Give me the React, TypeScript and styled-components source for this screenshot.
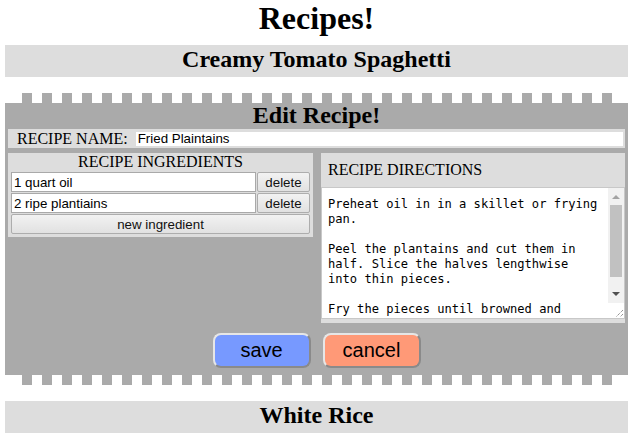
import styled, { createGlobalStyle } from "styled-components";

const GlobalStyle = createGlobalStyle`
  body {
    margin: 0;
    background: white;
    font-family: "Liberation Serif", "Times New Roman", serif;
    color: black;
  }
`;

const Page = styled.div`
  width: 623px;
  margin-left: 5px;
`;

const PageTitle = styled.h1`
  margin: 0 0 8px;
  font-size: 32px;
  line-height: 37px;
  text-align: center;
`;

const RecipeBar = styled.h2`
  margin: 0;
  height: 32px;
  background-color: #dddddd;
  font-size: 24px;
  line-height: 28px;
  text-align: center;
`;

const Editor = styled.div`
  margin: 16px 0;
`;

const Teeth = styled.div`
  height: 10px;
  margin: 0 16px 0 17px;
  background: repeating-linear-gradient(
    to right,
    #aaaaaa 0 10px,
    transparent 10px 20px
  );
`;

const EditBody = styled.div`
  background-color: #aaaaaa;
  padding: 0 3px 7px;
`;

const EditTitle = styled.h2`
  margin: 0;
  font-size: 24px;
  line-height: 24px;
  text-align: center;
`;

const NameRow = styled.div`
  margin-top: 2px;
  height: 19px;
  display: flex;
  align-items: center;
  gap: 7px;
  padding: 0 1px 0 9px;
  background-color: #dddddd;
  font-size: 16px;
`;

const Label = styled.span`
  white-space: nowrap;
`;

const TextInput = styled.input<{ $tall?: boolean }>`
  flex: 1;
  min-width: 0;
  box-sizing: border-box;
  height: ${(p) => (p.$tall ? "20px" : "16px")};
  margin: 0;
  padding: 0 2px;
  border: 1px solid ${(p) => (p.$tall ? "#a9a9a9" : "#dddddd")};
  background: white;
  font-family: "Liberation Sans", Arial, sans-serif;
  font-size: 13.33px;
  color: black;
  outline: none;
`;

const Panels = styled.div`
  display: flex;
  align-items: flex-start;
  gap: 8px;
  margin-top: 5px;
`;

const IngredientsPanel = styled.div`
  width: 305px;
  box-sizing: border-box;
  padding: 0 3px 3px;
  background-color: #dddddd;
`;

const PanelHeading = styled.div`
  height: 19px;
  font-size: 16px;
  line-height: 17px;
  text-align: center;
`;

const IngredientList = styled.div`
  display: flex;
  flex-direction: column;
  gap: 1px;
`;

const IngredientRow = styled.div`
  display: flex;
  gap: 1px;
`;

const GreyButton = styled.button<{ $wide?: boolean }>`
  box-sizing: border-box;
  height: 20px;
  width: ${(p) => (p.$wide ? "100%" : "53px")};
  flex-shrink: 0;
  margin: 0;
  padding: 0;
  border: 1px solid #adadad;
  border-radius: 2px;
  background: linear-gradient(#f2f2f2, #e1e1e1);
  font-family: "Liberation Sans", Arial, sans-serif;
  font-size: 13.33px;
  color: #111;
`;

const DirectionsPanel = styled.div`
  flex: 1;
  background-color: #dddddd;
  padding-bottom: 4px;
`;

const DirectionsHeading = styled.div`
  height: 34px;
  line-height: 34px;
  padding-left: 7px;
  font-size: 16px;
`;

const DirectionsBox = styled.div`
  display: flex;
  height: 132px;
  box-sizing: border-box;
  border: 1px solid #c8c8c8;
  background: white;
`;

const Directions = styled.textarea`
  flex: 1;
  min-width: 0;
  box-sizing: border-box;
  margin: 0;
  padding: 9px 9px 0 6px;
  border: none;
  background: white;
  font-family: "DejaVu Sans Mono", "Liberation Mono", monospace;
  font-size: 12.1px;
  line-height: 15px;
  color: black;
  resize: none;
  overflow: hidden;
  outline: none;
`;

const ScrollColumn = styled.div`
  width: 16px;
  display: flex;
  flex-direction: column;
`;

const ScrollArrow = styled.div<{ $down?: boolean }>`
  height: 17px;
  flex-shrink: 0;
  display: flex;
  align-items: center;
  justify-content: center;
  background: #f1f1f1;

  &::before {
    content: "";
    width: 0;
    height: 0;
    border-left: 4px solid transparent;
    border-right: 4px solid transparent;
    ${(p) =>
      p.$down
        ? "border-top: 4px solid #505050;"
        : "border-bottom: 4px solid #a3a3a3;"}
  }
`;

const ScrollTrack = styled.div`
  flex: 1;
  background: #f1f1f1;
  padding: 0 2px;
`;

const ScrollThumb = styled.div`
  height: 72px;
  background: #c1c1c1;
`;

const Resizer = styled.div`
  height: 15px;
  flex-shrink: 0;
  display: flex;
  align-items: flex-end;
  justify-content: flex-end;
  background: white;
  border-top: 1px solid #f1f1f1;
`;

const ActionRow = styled.div`
  display: flex;
  justify-content: center;
  gap: 12px;
  margin-top: 10px;
`;

const ActionButton = styled.button<{ $tone: string }>`
  width: 98px;
  height: 35px;
  box-sizing: border-box;
  padding: 0;
  border: 2px solid;
  border-color: #e6e6e6 #8a8a8a #8a8a8a #e6e6e6;
  border-radius: 8px;
  background-color: ${(p) => p.$tone};
  font-family: "Liberation Sans", Arial, sans-serif;
  font-size: 20px;
  color: black;
`;

const directions = `Preheat oil in in a skillet or frying pan.

Peel the plantains and cut them in half. Slice the halves lengthwise into thin pieces.

Fry the pieces until browned and crispy, turning them once halfway through.

Drain on paper towels and sprinkle with salt before serving.`;

const ingredients = ["1 quart oil", "2 ripe plantiains"];

export default function App() {
  return (
    <Page>
      <GlobalStyle />
      <PageTitle>Recipes!</PageTitle>
      <RecipeBar>Creamy Tomato Spaghetti</RecipeBar>
      <Editor>
        <Teeth />
        <EditBody>
          <EditTitle>Edit Recipe!</EditTitle>
          <NameRow>
            <Label>RECIPE NAME:</Label>
            <TextInput type="text" defaultValue="Fried Plaintains" />
          </NameRow>
          <Panels>
            <IngredientsPanel>
              <PanelHeading>RECIPE INGREDIENTS</PanelHeading>
              <IngredientList>
                {ingredients.map((item) => (
                  <IngredientRow key={item}>
                    <TextInput $tall type="text" defaultValue={item} />
                    <GreyButton>delete</GreyButton>
                  </IngredientRow>
                ))}
                <GreyButton $wide>new ingredient</GreyButton>
              </IngredientList>
            </IngredientsPanel>
            <DirectionsPanel>
              <DirectionsHeading>RECIPE DIRECTIONS</DirectionsHeading>
              <DirectionsBox>
                <Directions defaultValue={directions} />
                <ScrollColumn>
                  <ScrollArrow />
                  <ScrollTrack>
                    <ScrollThumb />
                  </ScrollTrack>
                  <ScrollArrow $down />
                  <Resizer>
                    <svg width="10" height="10" viewBox="0 0 10 10">
                      <path
                        d="M9 2 L2 9 M9 6 L6 9"
                        stroke="#666"
                        strokeWidth="1"
                        strokeDasharray="1 1"
                      />
                    </svg>
                  </Resizer>
                </ScrollColumn>
              </DirectionsBox>
            </DirectionsPanel>
          </Panels>
          <ActionRow>
            <ActionButton $tone="#7799ff">save</ActionButton>
            <ActionButton $tone="#ff9977">cancel</ActionButton>
          </ActionRow>
        </EditBody>
        <Teeth />
      </Editor>
      <RecipeBar>White Rice</RecipeBar>
    </Page>
  );
}
